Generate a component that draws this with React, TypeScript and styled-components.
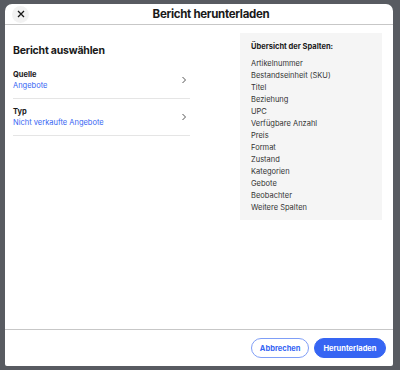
import styled, { createGlobalStyle } from "styled-components";

const GlobalStyle = createGlobalStyle`
  html, body {
    margin: 0;
    padding: 0;
    background: #585b61;
    font-family: Inter, "Liberation Sans", sans-serif;
    color: #191919;
  }
  body {
    padding: 4px 0 0 5px;
  }
`;

const Dialog = styled.div`
  width: 388px;
  height: 362px;
  background: #fff;
  border-radius: 7px 7px 2px 2px;
  display: flex;
  flex-direction: column;
  overflow: hidden;
`;

const Header = styled.header`
  height: 20px;
  border-bottom: 1px solid #c7c7c7;
  display: flex;
  align-items: center;
  padding: 0 6px 0 7px;
`;

const CloseButton = styled.button`
  width: 17px;
  height: 17px;
  border-radius: 50%;
  border: none;
  background: #f2f2f2;
  display: flex;
  align-items: center;
  justify-content: center;
  padding: 0;
  cursor: pointer;
`;

const Title = styled.h1`
  flex: 1;
  margin: 0;
  padding-left: 6px;
  text-align: center;
  font-size: 11.5px;
  letter-spacing: -0.3px;
  font-weight: 700;
`;

const Body = styled.main`
  flex: 1;
  display: flex;
  justify-content: space-between;
  padding: 8px 11px 0 8px;
`;

const LeftColumn = styled.section`
  width: 177px;
`;

const SectionTitle = styled.h2`
  margin: 11px 0 5px;
  font-size: 10.5px;
  letter-spacing: -0.2px;
  line-height: 13px;
  font-weight: 700;
`;

const Row = styled.div`
  display: flex;
  align-items: center;
  justify-content: space-between;
  height: 36px;
  border-bottom: 1px solid #e5e5e5;
  padding-right: 2px;
`;

const RowText = styled.div`
  display: flex;
  flex-direction: column;
  gap: 2px;
`;

const RowLabel = styled.span`
  font-size: 7.5px;
  font-weight: 700;
`;

const RowValue = styled.span`
  font-size: 7.5px;
  color: #3665f3;
`;

const Overview = styled.aside`
  width: 142px;
  height: 187px;
  background: #f5f5f5;
  padding: 9px 11px;
  box-sizing: border-box;
`;

const OverviewTitle = styled.h3`
  margin: 0 0 6px;
  font-size: 7.5px;
  font-weight: 700;
  line-height: 10px;
`;

const ColumnList = styled.ul`
  list-style: none;
  margin: 0;
  padding: 0;
  li {
    font-size: 7.5px;
    height: 12px;
    line-height: 12px;
    color: #333;
  }
`;

const Footer = styled.footer`
  height: 36px;
  border-top: 1px solid #c7c7c7;
  display: flex;
  align-items: center;
  justify-content: flex-end;
  gap: 5px;
  padding: 0 7px 0 0;
`;

const Button = styled.button<{ $primary?: boolean }>`
  height: 20px;
  border-radius: 10px;
  font-family: inherit;
  font-size: 7.5px;
  font-weight: 700;
  padding: 0 ${(p) => (p.$primary ? "8.5px" : "7.5px")};
  border: 1px solid ${(p) => (p.$primary ? "#3665f3" : "#7f9ef7")};
  background: ${(p) => (p.$primary ? "#3665f3" : "#fff")};
  color: ${(p) => (p.$primary ? "#fff" : "#3665f3")};
  cursor: pointer;
`;

const Chevron = () => (
  <svg width="8" height="8" viewBox="0 0 8 8" fill="none">
    <path d="M2.5 1 L5.5 4 L2.5 7" stroke="#555" strokeWidth="1" />
  </svg>
);

const columns = [
  "Artikelnummer",
  "Bestandseinheit (SKU)",
  "Titel",
  "Beziehung",
  "UPC",
  "Verfügbare Anzahl",
  "Preis",
  "Format",
  "Zustand",
  "Kategorien",
  "Gebote",
  "Beobachter",
  "Weitere Spalten",
];

export default function App() {
  return (
    <>
      <GlobalStyle />
      <Dialog>
        <Header>
          <CloseButton aria-label="Schließen">
            <svg width="8" height="8" viewBox="0 0 8 8">
              <path d="M1 1 L7 7 M7 1 L1 7" stroke="#191919" strokeWidth="1.3" />
            </svg>
          </CloseButton>
          <Title>Bericht herunterladen</Title>
        </Header>
        <Body>
          <LeftColumn>
            <SectionTitle>Bericht auswählen</SectionTitle>
            <Row>
              <RowText>
                <RowLabel>Quelle</RowLabel>
                <RowValue>Angebote</RowValue>
              </RowText>
              <Chevron />
            </Row>
            <Row>
              <RowText>
                <RowLabel>Typ</RowLabel>
                <RowValue>Nicht verkaufte Angebote</RowValue>
              </RowText>
              <Chevron />
            </Row>
          </LeftColumn>
          <Overview>
            <OverviewTitle>Übersicht der Spalten:</OverviewTitle>
            <ColumnList>
              {columns.map((c) => (
                <li key={c}>{c}</li>
              ))}
            </ColumnList>
          </Overview>
        </Body>
        <Footer>
          <Button>Abbrechen</Button>
          <Button $primary>Herunterladen</Button>
        </Footer>
      </Dialog>
    </>
  );
}
